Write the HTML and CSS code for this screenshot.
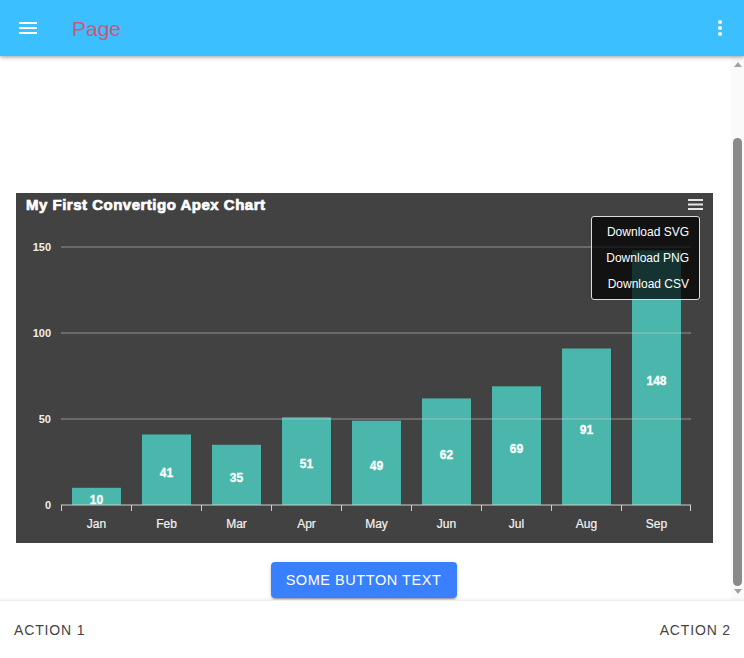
FILE: index.html
```html
<!DOCTYPE html>
<html>
<head>
<meta charset="utf-8">
<link rel="stylesheet" href="styles.css">
</head>
<body>
<div class="app">
  <header class="toolbar">
    <button class="icon-btn menu-btn" aria-label="menu">
      <svg width="18" height="12" viewBox="0 0 18 12"><rect x="0" y="0" width="18" height="2" fill="#fff"/><rect x="0" y="5" width="18" height="2" fill="#fff"/><rect x="0" y="10" width="18" height="2" fill="#fff"/></svg>
    </button>
    <div class="title">Page</div>
    <button class="icon-btn more-btn" aria-label="more">
      <svg width="4" height="16" viewBox="0 0 4 16"><circle cx="2" cy="2" r="2" fill="#fff"/><circle cx="2" cy="8" r="2" fill="#fff"/><circle cx="2" cy="14" r="2" fill="#fff"/></svg>
    </button>
  </header>
  <div class="body">
    <main class="content">
      <div class="chart">
        <svg class="chart-svg" width="697" height="350" viewBox="0 0 697 350">
          <text x="10" y="17" class="c-title">My First Convertigo Apex Chart</text>
          <g class="c-menu-icon">
            <rect x="672" y="6" width="15" height="2" fill="#e6e6e6"/>
            <rect x="672" y="10.5" width="15" height="2" fill="#e6e6e6"/>
            <rect x="672" y="15" width="15" height="2" fill="#e6e6e6"/>
          </g>
          <g class="c-ylabels">
            <text x="35" y="58">150</text>
            <text x="35" y="144">100</text>
            <text x="35" y="230">50</text>
            <text x="35" y="316">0</text>
          </g>
          <g class="c-bars">
            <rect x="56" y="294.8" width="49" height="17.2"/>
            <rect x="126" y="241.5" width="49" height="70.5"/>
            <rect x="196" y="251.8" width="49" height="60.2"/>
            <rect x="266" y="224.3" width="49" height="87.7"/>
            <rect x="336" y="227.7" width="49" height="84.3"/>
            <rect x="406" y="205.4" width="49" height="106.6"/>
            <rect x="476" y="193.3" width="49" height="118.7"/>
            <rect x="546" y="155.5" width="49" height="156.5"/>
            <rect x="616" y="57.4" width="49" height="254.6"/>
          </g>
          <g class="c-grid">
            <line x1="45" y1="54" x2="675" y2="54"/>
            <line x1="45" y1="140" x2="675" y2="140"/>
            <line x1="45" y1="226" x2="675" y2="226"/>
          </g>
          <g class="c-datalabels">
            <text x="80.5" y="311">10</text>
            <text x="150.5" y="284">41</text>
            <text x="220.5" y="289">35</text>
            <text x="290.5" y="275">51</text>
            <text x="360.5" y="277">49</text>
            <text x="430.5" y="266">62</text>
            <text x="500.5" y="260">69</text>
            <text x="570.5" y="241">91</text>
            <text x="640.5" y="192">148</text>
          </g>
          <g class="c-axis">
            <line x1="45" y1="312" x2="675" y2="312"/>
            <line x1="45.5" y1="312" x2="45.5" y2="318"/>
            <line x1="115.5" y1="312" x2="115.5" y2="318"/>
            <line x1="185.5" y1="312" x2="185.5" y2="318"/>
            <line x1="255.5" y1="312" x2="255.5" y2="318"/>
            <line x1="325.5" y1="312" x2="325.5" y2="318"/>
            <line x1="395.5" y1="312" x2="395.5" y2="318"/>
            <line x1="465.5" y1="312" x2="465.5" y2="318"/>
            <line x1="535.5" y1="312" x2="535.5" y2="318"/>
            <line x1="605.5" y1="312" x2="605.5" y2="318"/>
            <line x1="674.5" y1="312" x2="674.5" y2="318"/>
          </g>
          <g class="c-xlabels">
            <text x="80.5" y="335">Jan</text>
            <text x="150.5" y="335">Feb</text>
            <text x="220.5" y="335">Mar</text>
            <text x="290.5" y="335">Apr</text>
            <text x="360.5" y="335">May</text>
            <text x="430.5" y="335">Jun</text>
            <text x="500.5" y="335">Jul</text>
            <text x="570.5" y="335">Aug</text>
            <text x="640.5" y="335">Sep</text>
          </g>
        </svg>
        <div class="chart-menu">
          <div class="chart-menu-item">Download SVG</div>
          <div class="chart-menu-item">Download PNG</div>
          <div class="chart-menu-item">Download CSV</div>
        </div>
      </div>
      <div class="btn-row">
        <button class="primary-btn">Some Button Text</button>
      </div>
    </main>
    <div class="scrollbar">
      <div class="sb-arrow sb-up"></div>
      <div class="sb-track"><div class="sb-thumb"></div></div>
      <div class="sb-arrow sb-down"></div>
    </div>
  </div>
  <footer class="footer">
    <span class="action">Action 1</span>
    <span class="action">Action 2</span>
  </footer>
</div>
</body>
</html>
```

FILE: styles.css
```css
* { box-sizing: border-box; }
html, body { margin: 0; padding: 0; }
body {
  width: 744px;
  height: 658px;
  overflow: hidden;
  font-family: Roboto, "Liberation Sans", Arial, sans-serif;
  background: #fff;
}
.app {
  display: flex;
  flex-direction: column;
  height: 658px;
}
.toolbar {
  height: 56px;
  flex: 0 0 56px;
  background: #3bbfff;
  display: flex;
  align-items: center;
  position: relative;
  z-index: 2;
  box-shadow: 0 2px 4px rgba(0,0,0,0.22), 0 1px 2px rgba(0,0,0,0.12);
}
.icon-btn {
  border: 0;
  background: transparent;
  padding: 0;
  display: flex;
  align-items: center;
  justify-content: center;
}
.menu-btn {
  width: 18px;
  height: 12px;
  margin-left: 19px;
  margin-top: -1px;
}
.title {
  margin-left: 35px;
  font-family: "Liberation Sans", Arial, sans-serif;
  font-size: 21px;
  color: #d0587a;
  flex: 1;
  margin-top: 1px;
}
.more-btn {
  width: 4px;
  height: 16px;
  margin-right: 22px;
  margin-top: -1px;
}
.body {
  flex: 1;
  display: flex;
  min-height: 0;
}
.content {
  flex: 1;
  padding: 137px 18px 0 16px;
  display: flex;
  flex-direction: column;
}
.chart {
  position: relative;
  width: 697px;
  height: 350px;
  background: #424242;
}
.chart-svg { display: block; font-family: "Liberation Sans", Arial, sans-serif; }
.c-title { fill: #fff; font-size: 15px; font-weight: 700; stroke: #fff; stroke-width: 0.7px; letter-spacing: 0.5px; }
.c-ylabels text { fill: #eee; font-size: 11px; font-weight: 700; text-anchor: end; }
.c-bars rect { fill: #4bb7ac; }
.c-grid line { stroke: #c8c8c8; stroke-width: 1; opacity: 0.6; }
.c-datalabels text { fill: #fff; font-size: 12px; font-weight: 700; text-anchor: middle; stroke: #fff; stroke-width: 0.3px; }
.c-axis line { stroke: #cfcfcf; stroke-width: 1; }
.c-xlabels text { fill: #f2f2f2; font-size: 12px; text-anchor: middle; stroke: #f2f2f2; stroke-width: 0.2px; }
.chart-menu {
  position: absolute;
  left: 575px;
  top: 23px;
  width: 109px;
  padding: 2px 3px;
  background: rgba(0,0,0,0.72);
  border: 1px solid #ddd;
  border-radius: 3px;
  font-family: "Liberation Sans", Arial, sans-serif;
}
.chart-menu-item {
  color: #fff;
  font-size: 12px;
  line-height: 14px;
  padding: 6px 7px 6px 7px;
  text-align: right;
}
.btn-row {
  display: flex;
  justify-content: center;
  margin-top: 19px;
  padding-right: 2px;
}
.primary-btn {
  height: 36px;
  width: 186px;
  border: 0;
  border-radius: 4px;
  background: #3880ff;
  color: #fff;
  font-family: "Liberation Sans", Arial, sans-serif;
  font-size: 14.5px;
  font-weight: 400;
  letter-spacing: 0.55px;
  text-transform: uppercase;
  box-shadow: 0 3px 1px -2px rgba(0,0,0,0.2), 0 2px 2px 0 rgba(0,0,0,0.14), 0 1px 5px 0 rgba(0,0,0,0.12);
}
.scrollbar {
  width: 13px;
  flex: 0 0 13px;
  background: #fafafa;
  display: flex;
  flex-direction: column;
  align-items: center;
}
.sb-arrow {
  width: 0;
  height: 0;
  border-left: 4px solid transparent;
  border-right: 4px solid transparent;
}
.sb-up {
  border-bottom: 5px solid #a3a3a3;
  margin-top: 6px;
}
.sb-down {
  border-top: 5px solid #a3a3a3;
  margin-bottom: 6px;
}
.sb-track {
  flex: 1;
  width: 100%;
  display: flex;
  flex-direction: column;
  justify-content: flex-end;
  align-items: center;
  padding-bottom: 3px;
}
.sb-thumb {
  width: 9px;
  height: 448px;
  background: #8a8a8a;
  border-radius: 5px;
}
.footer {
  flex: 0 0 58px;
  height: 58px;
  display: flex;
  justify-content: space-between;
  align-items: center;
  padding: 0 13px 0 14px;
  border-top: 1px solid #ececec;
  box-shadow: 0 -1px 3px rgba(0,0,0,0.06);
  position: relative;
  z-index: 1;
  background: #fff;
}
.action {
  font-family: "Liberation Sans", Arial, sans-serif;
  font-size: 14px;
  letter-spacing: 0.85px;
  text-transform: uppercase;
  color: #444;
}
```
